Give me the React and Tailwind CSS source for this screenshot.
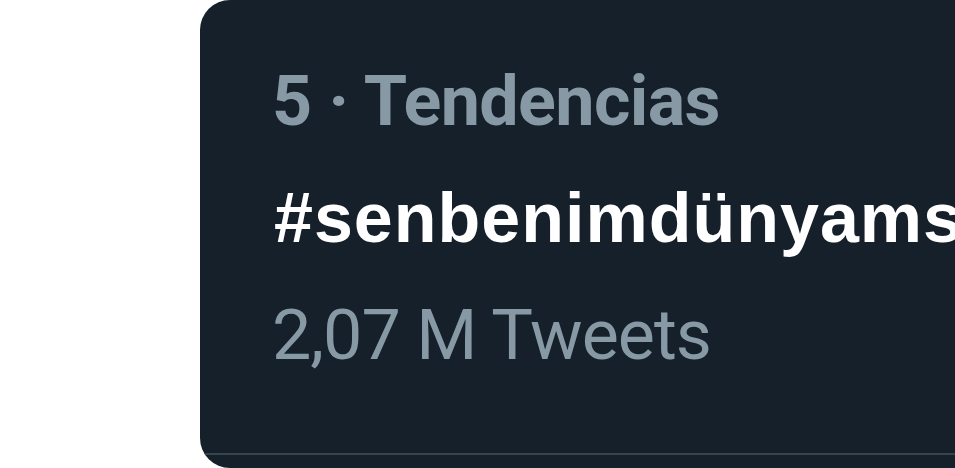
import React from 'react'

const App = () => {
  return (
    <div className="w-[955px] h-[468px] bg-white flex overflow-hidden" style={{ fontFamily: 'Roboto, "Noto Sans", sans-serif' }}>
      <div className="ml-[200px] flex-1 h-[468px] bg-[#15202b] rounded-l-[30px] flex flex-col overflow-hidden">
        <div className="h-[455px] border-b-2 border-[#38444d] pl-[272px] -ml-[200px] pt-[43px] whitespace-nowrap">
          <div className="text-[70px] leading-[117px] font-bold tracking-[-0.6px] text-[#8899a6]">5 · Tendencias</div>
          <div
            className="text-[70px] leading-[117px] font-bold tracking-[1px] text-white ml-[2px]"
            style={{ fontFamily: '"Liberation Sans", Arial, sans-serif' }}
          >
            #senbenimdünyamsın
          </div>
          <div className="text-[70px] leading-[117px] tracking-[-1px] text-[#8899a6]">2,07 M Tweets</div>
        </div>
      </div>
    </div>
  )
}

export default App
